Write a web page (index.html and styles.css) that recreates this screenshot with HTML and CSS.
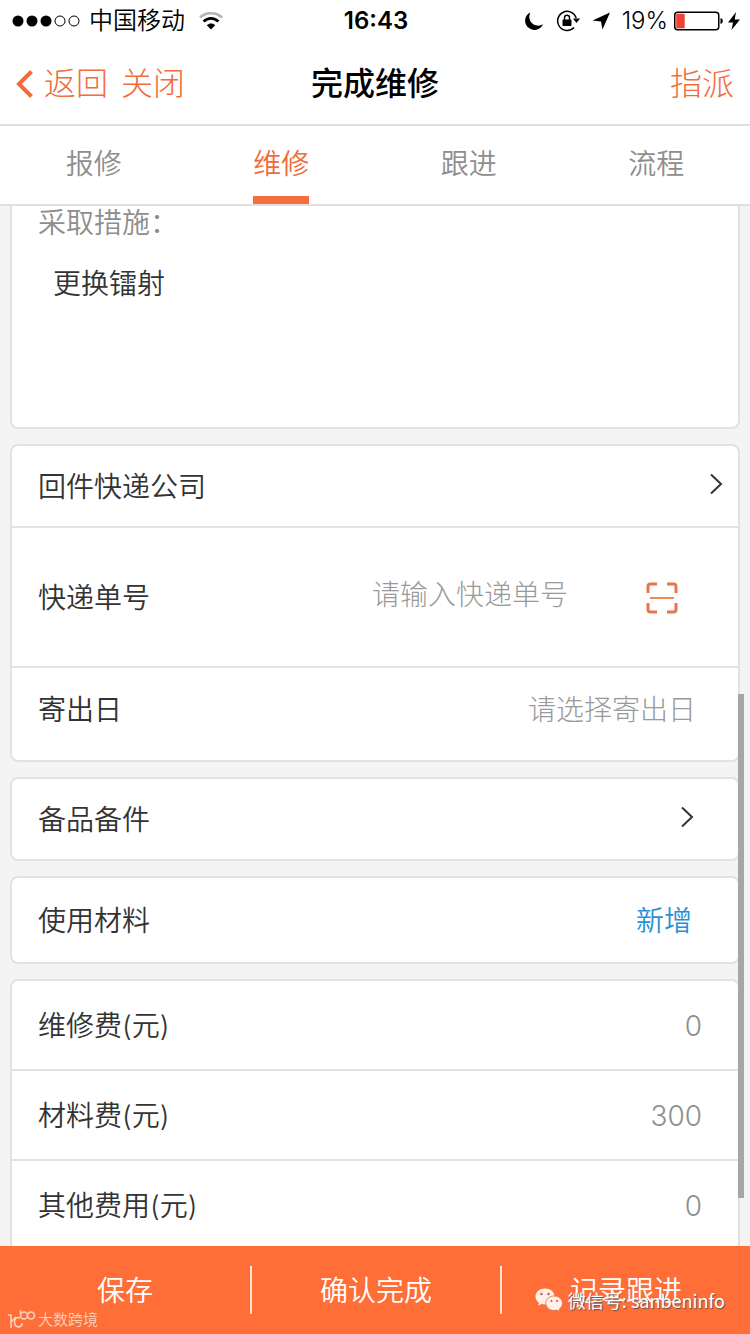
FILE: index.html
```html
<!DOCTYPE html>
<html lang="zh-CN">
<head>
    <meta charset="UTF-8">
    <meta name="viewport" content="width=device-width, initial-scale=1.0">
    <title>完成维修</title>
    <link rel="stylesheet" href="styles.css">
</head>
<body>

    <!-- Status bar -->
    <div class="status-bar">
        <div class="status-left">
            <svg class="signal" width="68" height="12" viewBox="0 0 68 12">
                <circle cx="6" cy="6" r="5.5"/>
                <circle cx="20" cy="6" r="5.5"/>
                <circle cx="34" cy="6" r="5.5"/>
                <circle cx="48" cy="6" r="5" fill="none" stroke="#000"/>
                <circle cx="62" cy="6" r="5" fill="none" stroke="#000"/>
            </svg>
            <span class="carrier">中国移动</span>
            <svg width="24" height="18" viewBox="0 0 24 18" fill="none">
                <path d="M1 5.5C7-.3 17-.3 23 5.5" stroke="#b5b5b5" stroke-width="2.6"/>
                <path d="M4.600 9.500C9 5.300 15 5.300 19.400 9.500" stroke="#000" stroke-width="2.800"/>
                <path d="M7.800 13.200C10.200 10.800 13.800 10.800 16.200 13.200L12 17.500Z" fill="#000"/>
            </svg>
        </div>
        <div class="status-time">16:43</div>
        <div class="status-right">
            <svg width="20" height="20" viewBox="0 0 20 20">
                <path d="M6.500 1.200A9.300 9.300 0 1 0 19 13.200A8.900 8.900 0 0 1 6.500 1.200Z"/>
            </svg>
            <svg class="lock" width="24" height="22" viewBox="0 0 24 22">
                <path d="M20.200 8A9.500 9.500 0 1 0 18 17.500" fill="none" stroke="#000" stroke-width="1.500"/>
                <path d="M17 8.500H24L20.500 13Z"/>
                <rect x="6.500" y="9.500" width="9" height="6.500" rx="1"/>
                <path d="M8.500 10V7.800A2.500 2.500 0 0 1 13.500 7.800V10" fill="none" stroke="#000" stroke-width="1.400"/>
            </svg>
            <svg class="location" width="18" height="18" viewBox="0 0 18 18">
                <path d="M18 .5L10.500 17.500L9 9.500L.5 8.500Z"/>
            </svg>
            <span class="percent">19%</span>
            <svg width="50" height="20" viewBox="0 0 50 20">
                <rect x=".75" y="1.250" width="44" height="17.500" rx="3" fill="none" stroke="#000" stroke-width="1.500"/>
                <rect x="2.200" y="2.700" width="8.500" height="14.600" rx="1" fill="#ef4136"/>
                <path d="M46.500 7C49.500 7.500 49.500 12.500 46.500 13Z"/>
            </svg>
            <svg class="bolt" width="12" height="20" viewBox="0 0 12 20">
                <path d="M8 1L0 11.500H5L3.500 19L12 8.500H6.700Z"/>
            </svg>
        </div>
    </div>

    <!-- Title bar -->
    <header class="nav">
        <div class="nav-left">
            <a href="#" class="back">
                <svg width="18" height="28" viewBox="0 0 18 28">
                    <path d="M15.500 1.500L3 14L15.500 26.500" fill="none" stroke="#f26b3a" stroke-width="4"/>
                </svg>
                <span>返回</span>
            </a>
            <a href="#">关闭</a>
        </div>
        <h1>完成维修</h1>
        <a href="#" class="assign">指派</a>
    </header>

    <!-- Tabs -->
    <nav class="tabs">
        <a href="#">报修</a>
        <a href="#" class="active">维修</a>
        <a href="#">跟进</a>
        <a href="#">流程</a>
    </nav>

    <!-- Form -->
    <main class="content">
        <section class="card card-measure">
            <label for="measure">采取措施：</label>
            <textarea id="measure">更换镭射</textarea>
        </section>

        <section class="card">
            <button class="row row-link" type="button">
                <span>回件快递公司</span>
                <svg width="14" height="22" viewBox="0 0 14 22">
                    <path d="M2 1.500L12 11L2 20.500"/>
                </svg>
            </button>
            <div class="row row-number">
                <label for="express-no">快递单号</label>
                <input id="express-no" type="text" placeholder="请输入快递单号">
                <button class="scan" type="button" aria-label="扫码">
                    <svg width="32" height="32" viewBox="0 0 32 32">
                        <path d="M2 11V4.500Q2 2 4.500 2H11M21 2H27.500Q30 2 30 4.500V11M30 21V27.500Q30 30 27.500 30H21M11 30H4.500Q2 30 2 27.500V21" fill="none" stroke="#e8754c" stroke-width="3"/>
                        <path d="M4 16H28" stroke="#ee8a58" stroke-width="2"/>
                    </svg>
                </button>
            </div>
            <div class="row row-date">
                <label for="send-date">寄出日</label>
                <input id="send-date" type="text" placeholder="请选择寄出日">
            </div>
        </section>

        <section class="card">
            <button class="row row-link row-spare" type="button">
                <span>备品备件</span>
                <svg width="14" height="22" viewBox="0 0 14 22">
                    <path d="M2 1.500L12 11L2 20.500"/>
                </svg>
            </button>
        </section>

        <section class="card">
            <div class="row row-material">
                <span>使用材料</span>
                <a href="#">新增</a>
            </div>
        </section>

        <section class="card">
            <div class="row row-fee">
                <label for="repair-fee">维修费(元)</label>
                <input id="repair-fee" type="text" value="0">
            </div>
            <div class="row row-fee">
                <label for="material-fee">材料费(元)</label>
                <input id="material-fee" type="text" value="300">
            </div>
            <div class="row row-fee">
                <label for="other-fee">其他费用(元)</label>
                <input id="other-fee" type="text" value="0">
            </div>
        </section>
    </main>
    <div class="scroll-thumb"></div>

    <!-- Bottom actions -->
    <footer class="actions">
        <button type="button">保存</button>
        <button type="button">确认完成</button>
        <button type="button">记录跟进</button>

        <div class="mark mark-left">
            <svg width="28" height="20" viewBox="0 0 28 20" fill="none" stroke="#ffd0bc" stroke-width="1.600">
                <path d="M0 5H3V18M3 12L8 7"/>
                <path d="M12 8C8 6.500 6.500 9 6.500 12C6.500 18 13 18.500 14.500 13"/>
                <path d="M12.500 0V5.500"/>
                <circle cx="16" cy="5.500" r="3.500"/>
                <circle cx="23" cy="5.500" r="3.500"/>
            </svg>
            <span>大数跨境</span>
        </div>
        <div class="mark mark-right">
            <svg width="28" height="24" viewBox="0 0 28 24">
                <path d="M10 .5C4.500 .5 .5 4 .5 8.500C.5 11 1.800 13.300 4 14.700L3.200 17.800L6.500 16C15 18 19.500 13.500 19.500 8.500C19.500 4 15.500 .5 10 .5Z" fill="#fff0e9"/>
                <path d="M19 8C14 8 10.800 11.300 10.800 15.300C10.800 19.300 14.300 22.500 19 22.500L22 22.100L25 23.700L24.300 21C26.300 19.600 27.500 17.600 27.500 15.300C27.500 11.300 24 8 19 8Z" fill="#fff0e9" stroke="#d96b42" stroke-width=".8"/>
                <g fill="#d9512c">
                    <circle cx="6.500" cy="6" r="1.200"/>
                    <circle cx="13.500" cy="6" r="1.200"/>
                    <circle cx="16.500" cy="13" r="1"/>
                    <circle cx="22" cy="13" r="1"/>
                </g>
            </svg>
            <span>微信号: sanbeninfo</span>
        </div>
    </footer>

</body>
</html>
```
FILE: styles.css
```css
/* Reset */
* {
    margin: 0;
    padding: 0;
    box-sizing: border-box;
}

body {
    display: flex;
    flex-direction: column;
    height: 100vh;
    overflow: hidden;
    position: relative;
    background: #f4f4f4;
    color: #333;
    font-family: Inter, "Noto Sans CJK SC", sans-serif;
    font-size: 28px;
    font-weight: 350;
    line-height: 40px;
}

a {
    color: #f26b3a;
    text-decoration: none;
}

button,
input,
textarea {
    border: none;
    background: none;
    color: inherit;
    font: inherit;
    outline: none;
}

svg {
    display: block;
    flex: none;
}

/* Status bar */
.status-bar {
    display: grid;
    grid-template-columns: 1fr auto 1fr;
    align-items: center;
    height: 42px;
    padding: 0 10px 0 12px;
    background: #fff;
    color: #000;
    font-size: 24px;
}

.status-left,
.status-right {
    display: flex;
    align-items: center;
}

.status-right {
    justify-content: flex-end;
}

.carrier {
    margin: 0 14px 0 9px;
}

.status-time {
    font-weight: 600;
}

.lock {
    margin-left: 12px;
}

.location {
    margin: 0 12px;
}

.percent {
    margin-right: 6px;
}

.bolt {
    margin-left: 4px;
}

/* Title bar */
.nav {
    display: grid;
    grid-template-columns: 1fr auto 1fr;
    align-items: center;
    height: 84px;
    padding: 2px 16px 0;
    background: #fff;
    border-bottom: 2px solid #e0e0e0;
    font-size: 32px;
    font-weight: 300;
}

.nav-left,
.back {
    display: flex;
    align-items: center;
}

.back {
    gap: 10px;
    margin-right: 13px;
}

.nav h1 {
    color: #000;
    font-size: 32px;
    font-weight: 500;
}

.assign {
    text-align: right;
}

/* Tabs */
.tabs {
    display: grid;
    grid-template-columns: repeat(4, 1fr);
    justify-items: center;
    height: 80px;
    background: #fff;
    border-bottom: 2px solid #e0e0e0;
}

.tabs a {
    padding-top: 18px;
    color: #8e8e8e;
}

.tabs .active {
    border-bottom: 8px solid #f36f3f;
    color: #f26b3a;
}

/* Form */
.content {
    display: flex;
    flex: 1;
    flex-direction: column;
    gap: 15px;
    min-height: 0;
    padding: 0 10px;
    overflow: hidden;
}

.card {
    flex: none;
    background: #fff;
    border: 2px solid #e2e2e2;
    border-radius: 8px;
}

.card-measure {
    display: flex;
    flex-direction: column;
    border-top: none;
    border-radius: 0 0 8px 8px;
    padding: 0 26px 19px;
}

.card-measure label {
    line-height: 34px;
    color: #8e8e8e;
}

.card-measure textarea {
    height: 168px;
    padding: 24px 15px;
    resize: none;
}

.row {
    display: flex;
    align-items: center;
    justify-content: space-between;
    width: 100%;
    height: 80px;
    padding: 2px 26px 0;
}

.row + .row {
    border-top: 2px solid #e2e2e2;
}

.row input {
    flex: 1;
    min-width: 0;
    text-align: right;
    color: #8e8e8e;
    font-weight: 300;
}

.row input::placeholder {
    color: #999;
    opacity: 1;
}

.row-link {
    padding-right: 15px;
    text-align: left;
}

.row-link svg {
    margin-bottom: 6px;
}

.row-link path {
    fill: none;
    stroke: #333;
    stroke-width: 2;
}

.row-spare {
    padding-right: 44px;
}

.row-number {
    height: 140px;
    padding-right: 60px;
}

.row-number input {
    padding: 0 78px 6px 0;
}

.row-date {
    height: 94px;
    padding: 0 42px 8px 26px;
}

.row-material {
    height: 84px;
    padding-right: 46px;
}

.row-material a {
    color: #2b8fd6;
}

.row-fee {
    height: 90px;
    padding-right: 36px;
}

.row-fee:first-child {
    height: 88px;
}

.scroll-thumb {
    position: absolute;
    top: 52%;
    right: 6px;
    bottom: 136px;
    width: 6px;
    background: #a6a6a6;
}

/* Bottom actions */
.actions {
    position: relative;
    display: grid;
    grid-template-columns: repeat(3, 1fr);
    align-items: center;
    height: 88px;
    background: #ff6e37;
}

.actions button {
    height: 48px;
    padding-top: 2px;
    color: #fff;
}

.actions button + button {
    border-left: 2px solid #ffe0d2;
}

/* Marks over the bottom bar */
.mark {
    position: absolute;
    display: flex;
    align-items: center;
    white-space: nowrap;
}

.mark-left {
    left: 8px;
    bottom: 4px;
    gap: 2px;
    color: #ffd0bc;
    font-size: 15px;
    line-height: 20px;
}

.mark-right {
    right: 25px;
    bottom: 21px;
    gap: 5px;
    color: #fff;
    font-family: "Noto Sans CJK SC", sans-serif;
    font-size: 18px;
    font-weight: 400;
    line-height: 26px;
    text-shadow: 1px 1px 1px #555;
}
```
